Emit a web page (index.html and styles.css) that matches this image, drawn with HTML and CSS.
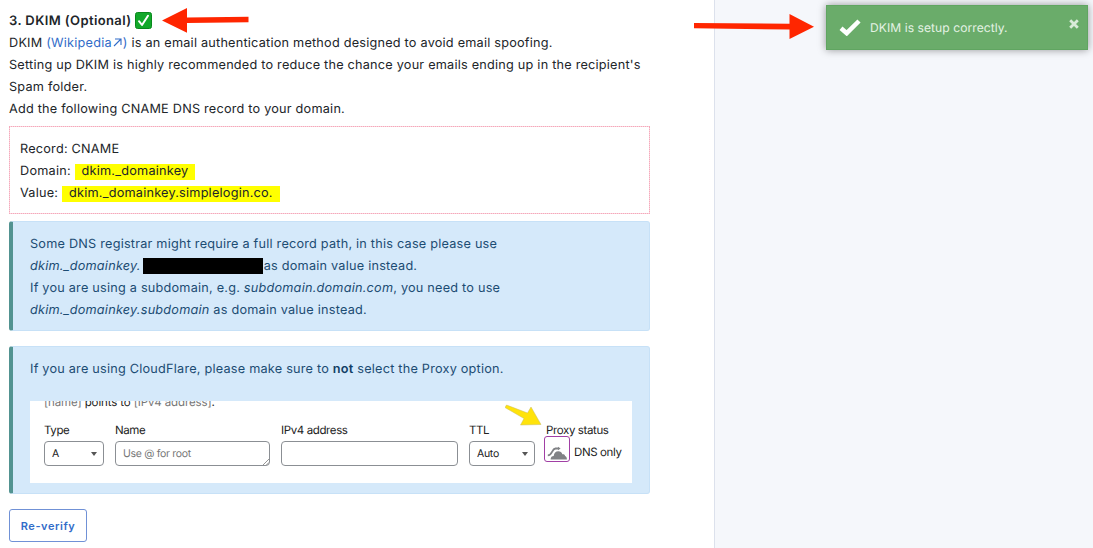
FILE: index.html
```html
<!DOCTYPE html>
<html lang="en">
<head>
<meta charset="utf-8">
<title>DKIM setup</title>
<link rel="stylesheet" href="styles.css">
</head>
<body>
<div class="page">
  <main class="content">
    <h2 class="title">3. DKIM (Optional)
      <svg class="check-badge" viewBox="0 0 17 17"><rect x=".5" y=".5" width="16" height="16" rx="2" fill="#12a82a" stroke="#08891c"/><path d="M4 9.2 7 13 13 3.8" fill="none" stroke="#fff" stroke-width="2" stroke-linecap="round" stroke-linejoin="round"/></svg>
    </h2>
    <p class="text">DKIM <a class="link">(Wikipedia<svg class="link-arrow" viewBox="0 0 9 9"><path d="M1 8 8 1M2 1h6v6" fill="none" stroke="currentColor" stroke-width="1.1"/></svg>)</a> is an email authentication method designed to avoid email spoofing.<br>Setting up DKIM is highly recommended to reduce the chance your emails ending up in the recipient's<br>Spam folder.<br>Add the following CNAME DNS record to your domain.</p>
    <div class="record">
      <div>Record: CNAME</div>
      <div>Domain: <span class="mark">dkim._domainkey</span></div>
      <div>Value: <span class="mark">dkim._domainkey.simplelogin.co.</span></div>
    </div>
    <div class="alert alert-domain">Some DNS registrar might require a full record path, in this case please use<br><em>dkim._domainkey.</em><span class="redacted"></span>as domain value instead.<br>If you are using a subdomain, e.g. <em>subdomain.domain.com</em>, you need to use<br><em>dkim._domainkey.subdomain</em> as domain value instead.</div>
    <div class="alert alert-proxy">
      <div>If you are using CloudFlare, please make sure to <b>not</b> select the Proxy option.</div>
      <div class="dns">
        <div class="dns-caption"><span>[name]</span> points to <span>[IPv4 address]</span>.</div>
        <div class="fields">
          <div class="field field-type"><label>Type</label><div class="input">A<i class="caret"></i></div></div>
          <div class="field field-name"><label>Name</label><div class="input placeholder">Use @ for root<svg class="grip" viewBox="0 0 7 7"><path d="M0 7 7 0M4 7 7 4" stroke="#777" stroke-width=".9"/></svg></div></div>
          <div class="field field-ip"><label>IPv4 address</label><div class="input"></div></div>
          <div class="field field-ttl"><label>TTL</label><div class="input">Auto<i class="caret"></i></div></div>
          <div class="field field-proxy"><label>Proxy status</label>
            <div class="proxy"><span class="cloud-box"><svg class="cloud" viewBox="0 0 20 14"><path d="M.8 9.400C5.500 9.400 4.500 3 8.500 2.500h3" fill="none" stroke="#808285" stroke-width="1.800"/><path d="M11 .7 13.600 2.500 11 4.300z" fill="#808285"/><path d="M3.600 13.500C3.600 11 5 9.900 6.700 9.900 7 7 8.700 5.200 11.300 5.200c2.200 0 3.500 1.200 4.100 3 1.700-.2 2.500.5 2.700 1.700 1.300.4 1.800 1.700 1.800 3.600z" fill="#808285"/></svg></span><span class="proxy-text">DNS only</span></div>
          </div>
        </div>
        <svg class="arrow-yellow" viewBox="0 0 38 24"><path d="M1.500 1 0 3.500 19 14.500 15.500 21 36 20.500 26 3 22.500 9z" fill="#ffe30b" stroke="#c9bd62" stroke-width=".5"/></svg>
      </div>
    </div>
    <button class="verify">Re-verify</button>
  </main>
  <aside class="side"></aside>
</div>
<div class="toast">
  <svg class="toast-check" viewBox="0 0 22 17"><path d="M2 9.200 7.700 14.200 20 2" fill="none" stroke="#fff" stroke-width="4.500"/></svg>
  <span class="toast-text">DKIM is setup correctly.</span>
  <svg class="toast-close" viewBox="0 0 10 10"><path d="M1.200 1.200 8.800 8.800M8.800 1.200 1.200 8.800" stroke="#d9ebd9" stroke-width="2.800"/></svg>
</div>
<svg class="arrow-left" viewBox="0 0 88 26"><path d="M0 12.500 25 0V9.500L86.500 8.700V14.200L25 15.100V24.700z" fill="#ff2600"/></svg>
<svg class="arrow-right" viewBox="0 0 122 26"><path d="M0 9V14.300L95.500 15.500V25L120 12.700 95.500 0V9.800z" fill="#ff2600"/></svg>
</body>
</html>
```
FILE: styles.css
```css
* { box-sizing: border-box; }
body { margin: 0; width: 1093px; height: 548px; overflow: hidden; background: #fff; font-family: Inter, "Liberation Sans", sans-serif; font-size: 12.700px; line-height: 22px; letter-spacing: .22px; text-rendering: geometricPrecision; color: #212529; }
.page { display: flex; height: 548px; }
.content { width: 714px; padding: 10px 64px 0 9px; white-space: nowrap; }
.side { flex: 1; background: #f5f7fb; border-left: 1px solid #dce1ec; }
.title { margin: 0; font-size: 13px; height: 22px; line-height: 22px; font-weight: 600; letter-spacing: .4px; }
.check-badge { width: 17px; height: 17px; vertical-align: -4px; }
.text { margin: 0; padding-top: 1px; height: 88px; }
.link { color: #316cc9; }
.link-arrow { width: 9px; height: 9px; margin: 0 1px; }
.record { margin-top: 6px; height: 88px; padding: 12px 10px 8px; border: 1px dotted #f4a9bb; background: linear-gradient(#fff, #fff) padding-box, #fbd3dc border-box; }
.mark { display: inline-block; background: #ff0; padding: 0 7px; height: 16px; line-height: 16px; }
.alert { background: #d5e9fa; border: 1px solid #c7e1f7; border-left: 4px solid #529391; border-radius: 3px; color: #1c4c73; padding: 12px 17px; }
.alert-domain { margin-top: 7px; height: 110px; }
.alert-proxy { margin-top: 15px; height: 148px; }
.redacted { display: inline-block; width: 120px; height: 16px; margin: -4px 1px 0 2px; background: #000; vertical-align: -4px; }
.alert b { font-weight: 600; color: #123f66; }
.dns { position: relative; width: 602px; height: 82px; margin-top: 20px; background: #fff; overflow: hidden; color: #222; font-size: 11.500px; letter-spacing: -.38px; }
.dns-caption { height: 9px; padding-left: 14px; line-height: 14px; margin-top: -6px; letter-spacing: -.12px; }
.dns-caption span { color: #777; }
.fields { display: flex; padding: 18px 0 0 14px; }
.field label { display: block; height: 18px; line-height: 16px; }
.field-type { width: 60px; margin-right: 11px; }
.field-name { width: 155px; margin-right: 11px; }
.field-ip { width: 177px; margin-right: 11px; }
.field-ttl { width: 66px; margin-right: 9px; }
.input { display: flex; position: relative; align-items: center; justify-content: space-between; height: 25px; margin-top: 1px; border: 1px solid #8b8f94; border-radius: 4px; padding: 1px 6px 0 7px; font-size: 10.500px; letter-spacing: -.3px; }
.placeholder { color: #777; }
.caret { border: 3.500px solid transparent; border-top: 4px solid #555; border-bottom: 0; }
.grip { position: absolute; right: 0; bottom: 0; width: 6px; height: 6px; }
.field-proxy label { padding-left: 2px; height: 14px; }
.proxy { display: flex; align-items: center; gap: 4px; line-height: 26px; height: 26px; }
.proxy-text { padding-top: 6px; }
.cloud-box { width: 26px; height: 26px; border: 1.500px solid #a13fa5; border-radius: 3px; display: flex; align-items: center; justify-content: center; padding-top: 7px; }
.cloud { width: 20px; height: 14px; }
.arrow-yellow { position: absolute; left: 475px; top: 3px; width: 38px; height: 24px; }
.verify { display: block; margin-top: 15px; width: 78px; height: 33px; padding: 0; background: #fff; border: 1px solid #7091d6; border-radius: 3px; color: #316cc9; font-family: inherit; font-size: 11px; font-weight: 600; letter-spacing: .55px; }
.toast { position: absolute; left: 826px; top: 5px; width: 262px; height: 45px; display: flex; align-items: center; padding-left: 12px; background: #6aac6a; border: 1px solid #60a561; box-shadow: 0 0 8px rgba(0,0,0,.4); color: #e4f2e4; font-size: 12.100px; letter-spacing: .05px; }
.toast-check { width: 22px; height: 17px; }
.toast-text { margin-left: 9px; padding-top: 1px; flex: 1; }
.toast-close { width: 10px; height: 10px; margin: 0 8px 8px 0; }
.arrow-left { position: absolute; left: 162px; top: 8px; width: 88px; height: 26px; }
.arrow-right { position: absolute; left: 694px; top: 14px; width: 122px; height: 26px; }
```
